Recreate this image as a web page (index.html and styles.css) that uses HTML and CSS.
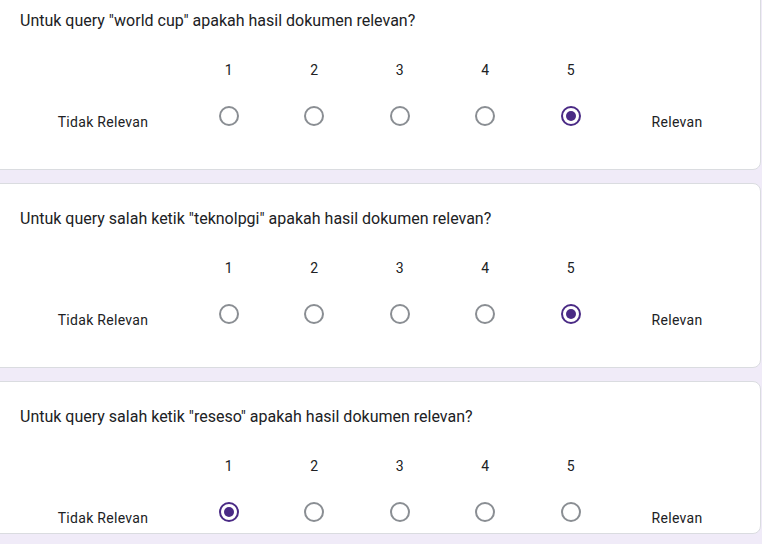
FILE: index.html
```html
<!DOCTYPE html>
<html lang="id">
<head>
<meta charset="utf-8">
<link rel="stylesheet" href="styles.css">
</head>
<body>
<div class="list">
  <div class="card">
    <div class="question">Untuk query "world cup" apakah hasil dokumen relevan?</div>
    <div class="scale">
      <div></div>
      <div class="num">1</div><div class="num">2</div><div class="num">3</div><div class="num">4</div><div class="num">5</div>
      <div></div>
      <div class="label">Tidak Relevan</div>
      <div class="cell"><span class="radio"></span></div>
      <div class="cell"><span class="radio"></span></div>
      <div class="cell"><span class="radio"></span></div>
      <div class="cell"><span class="radio"></span></div>
      <div class="cell"><span class="radio on"></span></div>
      <div class="label">Relevan</div>
    </div>
  </div>
  <div class="card">
    <div class="question">Untuk query salah ketik "teknolpgi" apakah hasil dokumen relevan?</div>
    <div class="scale">
      <div></div>
      <div class="num">1</div><div class="num">2</div><div class="num">3</div><div class="num">4</div><div class="num">5</div>
      <div></div>
      <div class="label">Tidak Relevan</div>
      <div class="cell"><span class="radio"></span></div>
      <div class="cell"><span class="radio"></span></div>
      <div class="cell"><span class="radio"></span></div>
      <div class="cell"><span class="radio"></span></div>
      <div class="cell"><span class="radio on"></span></div>
      <div class="label">Relevan</div>
    </div>
  </div>
  <div class="card card-last">
    <div class="question">Untuk query salah ketik "reseso" apakah hasil dokumen relevan?</div>
    <div class="scale">
      <div></div>
      <div class="num">1</div><div class="num">2</div><div class="num">3</div><div class="num">4</div><div class="num">5</div>
      <div></div>
      <div class="label">Tidak Relevan</div>
      <div class="cell"><span class="radio on"></span></div>
      <div class="cell"><span class="radio"></span></div>
      <div class="cell"><span class="radio"></span></div>
      <div class="cell"><span class="radio"></span></div>
      <div class="cell"><span class="radio"></span></div>
      <div class="label">Relevan</div>
    </div>
  </div>
</div>
</body>
</html>
```
FILE: styles.css
```css
html, body {
  margin: 0;
  padding: 0;
  background: #f0ebf8;
  overflow: hidden;
}
body {
  font-family: Roboto, "Liberation Sans", sans-serif;
  color: #202124;
}
.list {
  margin-top: -15px;
  padding-right: 1px;
  display: flex;
  flex-direction: column;
  gap: 13px;
}
.card {
  background: #fff;
  border: 1px solid #dadce0;
  border-radius: 8px;
  margin-left: -12px;
  padding: 23px 0 37px 31px;
}
.card-last {
  padding-bottom: 5px;
}
.question {
  font-size: 16px;
  line-height: 24px;
  letter-spacing: 0;
}
.scale {
  margin-top: 27px;
  display: grid;
  grid-template-columns: 166px repeat(5, 85.5px) 127px;
  grid-template-rows: 20px 26px;
  row-gap: 26px;
  font-size: 14px;
  line-height: 20px;
}
.num {
  text-align: center;
}
.label {
  text-align: center;
  align-self: end;
  letter-spacing: 0.3px;
}
.cell {
  display: flex;
  justify-content: center;
  align-items: flex-start;
}
.radio {
  width: 20px;
  height: 20px;
  box-sizing: border-box;
  border: 2px solid #8a8e93;
  border-radius: 50%;
  display: flex;
  align-items: center;
  justify-content: center;
}
.radio.on {
  border-color: #4a2a85;
}
.radio.on::after {
  content: "";
  width: 10px;
  height: 10px;
  border-radius: 50%;
  background: #4a2a85;
}
```
